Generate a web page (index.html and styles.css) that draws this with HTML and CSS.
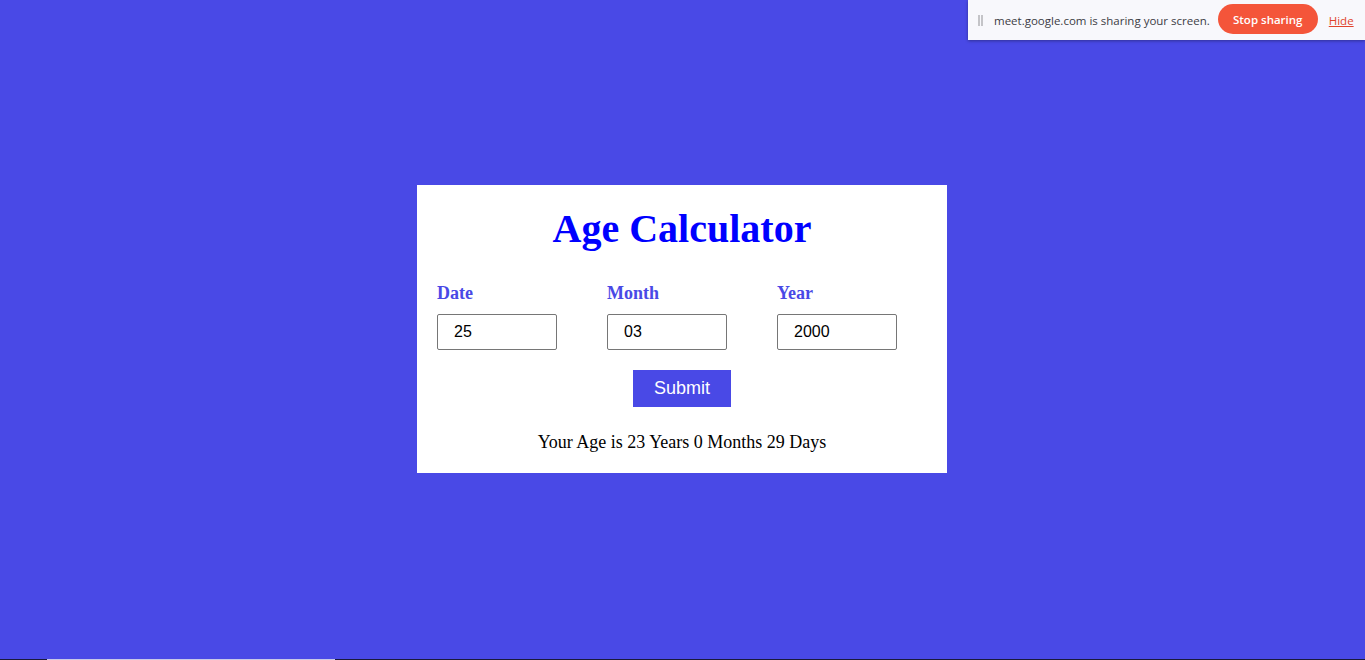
FILE: index.html
```html
<!DOCTYPE html>
<html>
<head>
<meta charset="utf-8">
<link rel="stylesheet" href="styles.css">
</head>
<body>
<div class="share-bar">
  <span class="grip"></span>
  <span class="share-text">meet.google.com is sharing your screen.</span>
  <button class="stop-btn">Stop sharing</button>
  <a class="hide-link">Hide</a>
</div>
<main class="page">
  <section class="card">
    <h1 class="title">Age Calculator</h1>
    <div class="fields">
      <div class="field">
        <label class="label">Date</label>
        <input class="input" type="text" value="25">
      </div>
      <div class="field">
        <label class="label">Month</label>
        <input class="input" type="text" value="03">
      </div>
      <div class="field">
        <label class="label">Year</label>
        <input class="input" type="text" value="2000">
      </div>
    </div>
    <button class="submit">Submit</button>
    <p class="result">Your Age is 23 Years 0 Months 29 Days</p>
  </section>
</main>
<div class="taskbar"><span class="taskbar-seg"></span></div>
</body>
</html>
```
FILE: styles.css
```css
html, body {
  margin: 0;
  padding: 0;
  height: 100%;
}
body {
  background: #4949e6;
  font-family: "Liberation Serif", "Times New Roman", serif;
  overflow: hidden;
  position: relative;
}
.page {
  height: 659px;
  display: flex;
  justify-content: center;
  align-items: center;
  padding-right: 1px;
}
.card {
  width: 530px;
  height: 288px;
  box-sizing: border-box;
  background: #fff;
  padding: 20px 20px 0 20px;
  display: flex;
  flex-direction: column;
  align-items: center;
  margin-top: -1px;
}
.title {
  margin: 0;
  font-size: 40px;
  line-height: 48px;
  color: #0000ff;
  font-weight: bold;
}
.fields {
  align-self: stretch;
  display: flex;
  gap: 50px;
  margin-top: 31px;
}
.field {
  display: flex;
  flex-direction: column;
  width: 120px;
}
.label {
  font-weight: bold;
  font-size: 18px;
  line-height: 18px;
  color: #4949e6;
  margin-bottom: 12px;
}
.input {
  width: 120px;
  height: 36px;
  box-sizing: border-box;
  border: 1px solid #767676;
  border-radius: 2px;
  padding: 0 16px;
  font-family: "Liberation Sans", Arial, sans-serif;
  font-size: 16px;
  color: #000;
  outline: none;
}
.submit {
  margin-top: 20px;
  width: 98px;
  height: 37px;
  border: none;
  background: #4949e6;
  color: #fff;
  font-family: "Liberation Sans", Arial, sans-serif;
  font-size: 18px;
  padding: 0;
}
.result {
  margin: 25px 0 0 0;
  font-size: 18px;
  line-height: 20px;
  color: #000;
}
.share-bar {
  position: absolute;
  top: 0;
  right: 0;
  width: 397px;
  height: 40px;
  box-sizing: border-box;
  background: #f8f8fc;
  box-shadow: 0 1px 3px rgba(0,0,0,0.35);
  display: flex;
  align-items: center;
  padding: 0 11px 0 10px;
  font-family: "Open Sans", "Noto Sans", sans-serif;
  z-index: 5;
}
.grip {
  width: 5px;
  height: 11px;
  border-left: 2px solid #c4c4c8;
  border-right: 2px solid #c4c4c8;
  box-sizing: border-box;
  margin-right: 11px;
}
.share-text {
  font-size: 11.5px;
  color: #3c3c44;
  white-space: nowrap;
}
.stop-btn {
  margin-left: 8px;
  width: 100px;
  height: 30px;
  margin-top: -2px;
  border: none;
  border-radius: 15px;
  background: #f4553a;
  color: #fff;
  font-family: "Open Sans", "Noto Sans", sans-serif;
  font-weight: 600;
  font-size: 11.5px;
  padding: 0;
}
.hide-link {
  margin-left: 11px;
  font-size: 11.5px;
  color: #e0442c;
  text-decoration: underline;
}
.taskbar {
  position: absolute;
  left: 0;
  bottom: 0;
  width: 100%;
  height: 1px;
  background: #1a1a3a;
}
.taskbar-seg {
  display: block;
  margin-left: 47px;
  width: 288px;
  height: 1px;
  background: #c8c8e8;
}
```
